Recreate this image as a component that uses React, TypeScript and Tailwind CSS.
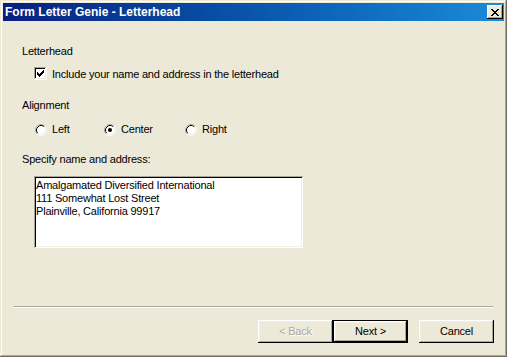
import { useState } from "react";

const font = { fontFamily: '"Liberation Sans", Arial, sans-serif' };

const bevelOut =
  "shadow-[inset_-1px_-1px_#000,inset_1px_1px_#fff,inset_-2px_-2px_#aca899,inset_2px_2px_#f1efe2]";

function CloseGlyph() {
  const rows = ["XX....XX", ".XX..XX.", "..XXXX..", "...XX...", "..XXXX..", ".XX..XX.", "XX....XX"];
  return (
    <svg width="8" height="7" viewBox="0 0 8 7" shapeRendering="crispEdges">
      {rows.flatMap((row, y) =>
        row.split("").map((c, x) => (c === "X" ? <rect key={`${x}-${y}`} x={x} y={y} width="1" height="1" fill="#000" /> : null)),
      )}
    </svg>
  );
}

function CheckBox({ checked }: { checked: boolean }) {
  // classic 7x7 tick, columns of three pixels
  const cols = [2, 3, 4, 3, 2, 1, 0];
  return (
    <svg width="13" height="13" viewBox="0 0 13 13" shapeRendering="crispEdges" className="shrink-0">
      <rect x="0" y="0" width="13" height="13" fill="#fff" />
      <rect x="0" y="0" width="12" height="1" fill="#aca899" />
      <rect x="0" y="0" width="1" height="12" fill="#aca899" />
      <rect x="1" y="1" width="10" height="1" fill="#000" />
      <rect x="1" y="1" width="1" height="10" fill="#000" />
      <rect x="1" y="11" width="11" height="1" fill="#f1efe2" />
      <rect x="11" y="1" width="1" height="11" fill="#f1efe2" />
      {checked && cols.map((top, i) => <rect key={i} x={3 + i} y={3 + top} width="1" height="3" fill="#000" />)}
    </svg>
  );
}

function Radio({ checked }: { checked: boolean }) {
  return (
    <svg width="12" height="12" viewBox="0 0 12 12" className="shrink-0">
      <circle cx="6" cy="6" r="5" fill="#fff" />
      <path d="M2.11 9.89 A5.5 5.5 0 0 1 9.89 2.11" fill="none" stroke="#aca899" strokeWidth="1" />
      <path d="M9.89 2.11 A5.5 5.5 0 0 1 2.11 9.89" fill="none" stroke="#fff" strokeWidth="1" />
      <path d="M2.82 9.18 A4.5 4.5 0 0 1 9.18 2.82" fill="none" stroke="#000" strokeWidth="1" />
      <path d="M9.18 2.82 A4.5 4.5 0 0 1 2.82 9.18" fill="none" stroke="#f1efe2" strokeWidth="1" />
      {checked && <circle cx="6" cy="6" r="2" fill="#000" />}
    </svg>
  );
}

function WizardButton({ label, disabled, isDefault }: { label: string; disabled?: boolean; isDefault?: boolean }) {
  if (isDefault) {
    return (
      <button type="button" className="h-[23px] w-[75px] border border-black bg-[#ece9d8] p-0">
        <span className={`flex h-full w-full items-center justify-center text-[11px] leading-[13px] text-black ${bevelOut}`}>
          {label}
        </span>
      </button>
    );
  }
  return (
    <button
      type="button"
      disabled={disabled}
      className={`flex h-[23px] w-[75px] items-center justify-center bg-[#ece9d8] text-[11px] leading-[13px] ${bevelOut} ${
        disabled ? "text-[#aca899] [text-shadow:1px_1px_#fff]" : "text-black"
      }`}
    >
      {label}
    </button>
  );
}

export default function App() {
  const [includeName, setIncludeName] = useState(true);
  const [align, setAlign] = useState("center");

  const options = [
    { id: "left", label: "Left", width: "w-[69px]" },
    { id: "center", label: "Center", width: "w-[81px]" },
    { id: "right", label: "Right", width: "w-[60px]" },
  ];

  return (
    <div
      style={font}
      className="flex h-[357px] w-[507px] flex-col bg-[#ece9d8] p-[3px] text-[11px] leading-[13px] tracking-[-0.2px] text-black shadow-[inset_-1px_-1px_#716f64,inset_1px_1px_#ece9d8,inset_-2px_-2px_#aca899,inset_2px_2px_#fff]"
    >
      <div className="flex h-[18px] shrink-0 items-center justify-between bg-linear-to-r from-[#0a1f7f] to-[#1b8bd9] pl-[2px] pr-[1px]">
        <span className="text-[12px] font-bold leading-[14px] tracking-normal text-white">Form Letter Genie - Letterhead</span>
        <button type="button" className={`flex h-[14px] w-[16px] items-center justify-center bg-[#ece9d8] p-0 ${bevelOut}`}>
          <CloseGlyph />
        </button>
      </div>

      <div className="flex flex-col pl-[19px]">
        <p className="mt-[24px] h-[13px]">Letterhead</p>

        <label className="ml-[12px] mt-[9px] flex h-[13px] items-center gap-[5px]" onClick={() => setIncludeName((v) => !v)}>
          <CheckBox checked={includeName} />
          <span className="mt-[1px]">Include your name and address in the letterhead</span>
        </label>

        <p className="mt-[19px] h-[13px]">Alignment</p>

        <div className="ml-[13px] mt-[11px] flex h-[13px] items-center">
          {options.map((o) => (
            <label key={o.id} className={`flex items-center gap-[5px] ${o.width}`} onClick={() => setAlign(o.id)}>
              <Radio checked={align === o.id} />
              <span>{o.label}</span>
            </label>
          ))}
        </div>

        <p className="mt-[17px] h-[13px]">Specify name and address:</p>

        <div className="ml-[12px] mt-[10px] h-[72px] w-[269px] bg-white px-[2px] pt-[3px] shadow-[inset_1px_1px_#aca899,inset_-1px_-1px_#fff,inset_2px_2px_#000,inset_-2px_-2px_#f1efe2]">
          <p className="leading-[13px]">Amalgamated Diversified International</p>
          <p className="leading-[13px]">111 Somewhat Lost Street</p>
          <p className="leading-[13px]">Plainville, California 99917</p>
        </div>
      </div>

      <div className="ml-[11px] mt-[58px] h-[2px] w-[479px] border-t border-b border-t-[#aca899] border-b-white" />

      <div className="mt-[12px] flex justify-end pr-[10px]">
        <WizardButton label="< Back" disabled />
        <WizardButton label="Next >" isDefault />
        <div className="w-[11px]" />
        <WizardButton label="Cancel" />
      </div>
    </div>
  );
}
